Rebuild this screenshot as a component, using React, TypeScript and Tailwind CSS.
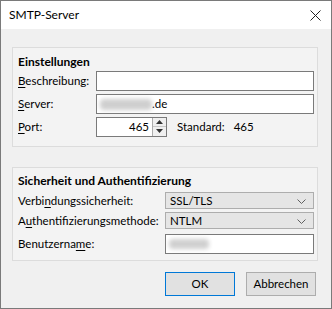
import React from "react";

const U = ({ c }: { c: string }) => <span className="underline underline-offset-2">{c}</span>;

function Chevron() {
  return (
    <svg width="9" height="6" viewBox="0 0 9 6" className="absolute right-[7px] top-[6px]">
      <path d="M0.5 0.5 L4.5 4.5 L8.5 0.5" fill="none" stroke="#606060" strokeWidth="1" />
    </svg>
  );
}

export default function App() {
  return (
    <div
      className="w-[332px] h-[309px] border border-[#7a7a7a] flex flex-col bg-[#f0f0f0] text-[11.5px] text-black overflow-hidden"
      style={{ fontFamily: 'Lato, "Noto Sans", sans-serif' }}
    >
      <div className="h-[28px] bg-white flex items-center justify-between pl-[8px] pr-[10px] shrink-0">
        <span className="text-[12px]">SMTP-Server</span>
        <svg width="11" height="11" viewBox="0 0 11 11">
          <path d="M0.5 0.5 L10.5 10.5 M10.5 0.5 L0.5 10.5" stroke="#222" strokeWidth="1" />
        </svg>
      </div>
      <div className="flex flex-col pl-[11px] pr-[13px] pt-[18px]">
        {/* Group 1 */}
        <div className="border border-[#dcdcdc] bg-[#f3f3f3] pl-[5px] pr-[3px] pt-[6px] pb-[9px] flex flex-col">
          <div className="font-bold leading-[16px] h-[16px] text-[12px]">Einstellungen</div>
          <div className="flex items-center mt-[1px] h-[20px]">
            <div className="w-[78px] shrink-0 leading-[16px] whitespace-nowrap"><U c="B" />eschreibung:</div>
            <div className="flex-1 h-[20px] border border-[#7a7a7a] bg-white" />
          </div>
          <div className="flex items-center mt-[3px] h-[20px]">
            <div className="w-[78px] shrink-0 leading-[16px]"><U c="S" />erver:</div>
            <div className="flex-1 h-[20px] border border-[#7a7a7a] bg-white flex items-center pl-[3px]">
              <span className="blur-[2px] bg-[#cfcfcf] h-[11px] w-[52px] inline-block rounded-sm" />
              <span className="leading-[16px]">.de</span>
            </div>
          </div>
          <div className="flex items-center mt-[3px] h-[20px]">
            <div className="w-[78px] shrink-0 leading-[16px]"><U c="P" />ort:</div>
            <div className="w-[71px] h-[20px] border border-[#7a7a7a] bg-white flex items-center">
              <span className="flex-1 text-right pr-[3px] leading-[16px]">465</span>
              <div className="w-[14px] h-[18px] border-l border-[#adadad] flex flex-col bg-[#f0f0f0]">
                <div className="h-[9px] flex items-center justify-center border-b border-[#c8c8c8]">
                  <svg width="7" height="4" viewBox="0 0 7 4"><path d="M0 4 L3.5 0 L7 4 Z" fill="#333" /></svg>
                </div>
                <div className="h-[8px] flex items-center justify-center">
                  <svg width="7" height="4" viewBox="0 0 7 4"><path d="M0 0 L3.5 4 L7 0 Z" fill="#333" /></svg>
                </div>
              </div>
            </div>
            <span className="ml-[10px] leading-[16px]">Standard:</span>
            <span className="ml-[9px] leading-[16px]">465</span>
          </div>
        </div>
        {/* Group 2 */}
        <div className="mt-[20px] border border-[#dcdcdc] bg-[#f3f3f3] pl-[5px] pr-[3px] pt-[5px] pb-[6px] flex flex-col">
          <div className="font-bold leading-[16px] h-[16px] text-[12px]">Sicherheit und Authentifizierung</div>
          <div className="flex items-center mt-[3px] h-[17px]">
            <div className="w-[147px] shrink-0 leading-[16px] whitespace-nowrap">Verbi<U c="n" />dungssicherheit:</div>
            <div className="relative flex-1 h-[17px] border border-[#adadad] bg-[#e5e5e5] pl-[4px] leading-[15px]">
              SSL/TLS
              <Chevron />
            </div>
          </div>
          <div className="flex items-center mt-[3px] h-[17px]">
            <div className="w-[147px] shrink-0 leading-[16px] whitespace-nowrap">A<U c="u" />thentifizierungsmethode:</div>
            <div className="relative flex-1 h-[17px] border border-[#adadad] bg-[#e5e5e5] pl-[4px] leading-[15px]">
              NTLM
              <Chevron />
            </div>
          </div>
          <div className="flex items-center mt-[5px] h-[20px]">
            <div className="w-[147px] shrink-0 leading-[16px]">Benutzerna<U c="m" />e:</div>
            <div className="flex-1 h-[20px] border border-[#7a7a7a] bg-white flex items-center pl-[3px]">
              <span className="blur-[2px] bg-[#d0d0d0] h-[10px] w-[40px] inline-block rounded-sm" />
            </div>
          </div>
        </div>
        <div className="flex justify-end gap-[11px] mt-[11px] pr-[2px]">
          <button className="w-[70px] h-[24px] border border-[#0078d7] bg-[#e1e1e1] leading-[16px]">OK</button>
          <button className="w-[70px] h-[24px] border border-[#adadad] bg-[#e1e1e1] leading-[16px]">Abbrechen</button>
        </div>
      </div>
    </div>
  );
}
